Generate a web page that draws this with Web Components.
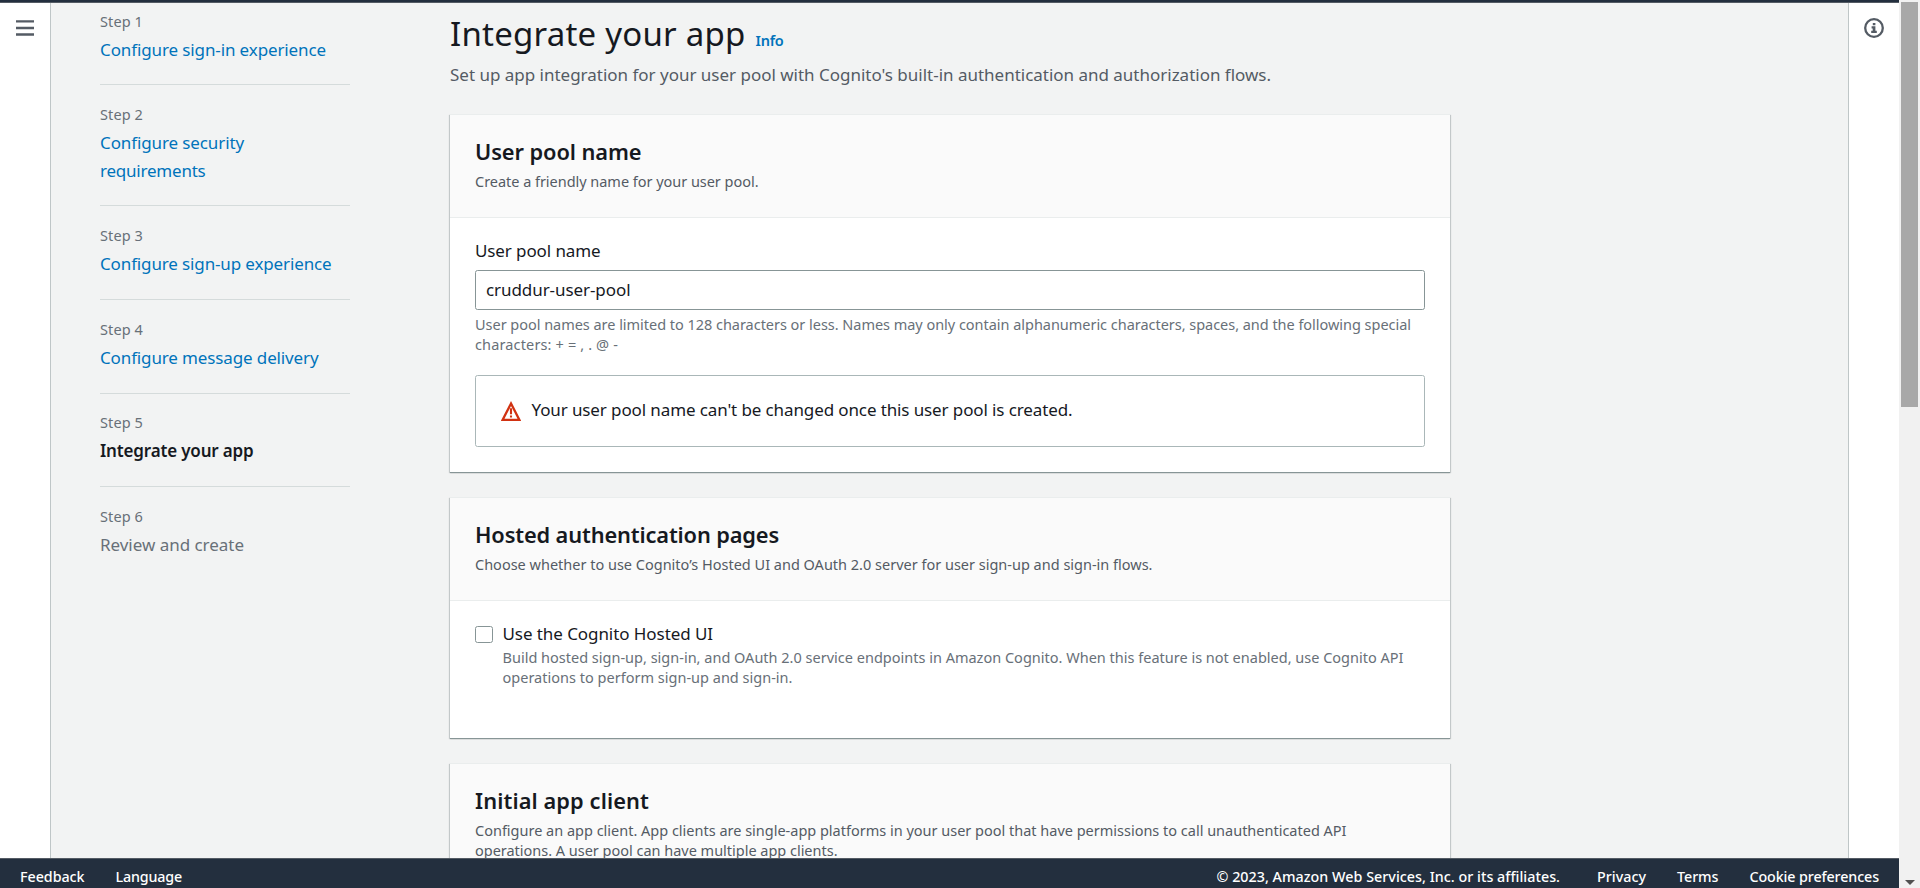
<!DOCTYPE html>
<html lang="en">
<head>
<meta charset="utf-8">
<title>Integrate your app</title>
<style>
  html, body { margin: 0; height: 100%; overflow: hidden; }
  body { font-family: "Noto Sans", "Open Sans", sans-serif; font-size: 17px; line-height: 26px; color: #16191f; }
</style>
</head>
<body>
<console-shell>
  <wizard-nav slot="nav">
    <wizard-step n="1" state="link" first><fit-line w="226">Configure sign-in experience</fit-line></wizard-step>
    <wizard-step n="2" state="link"><fit-line w="144">Configure security</fit-line><fit-line w="105.5">requirements</fit-line></wizard-step>
    <wizard-step n="3" state="link"><fit-line w="231.5">Configure sign-up experience</fit-line></wizard-step>
    <wizard-step n="4" state="link"><fit-line w="218.5">Configure message delivery</fit-line></wizard-step>
    <wizard-step n="5" state="current"><fit-line w="153.5">Integrate your app</fit-line></wizard-step>
    <wizard-step n="6" state="todo"><fit-line w="144">Review and create</fit-line></wizard-step>
  </wizard-nav>

  <page-heading slot="main">
    <fit-line w="295.5">Integrate your app</fit-line>
    <fit-line slot="info" w="28">Info</fit-line>
    <fit-line slot="sub" w="821">Set up app integration for your user pool with Cognito's built-in authentication and authorization flows.</fit-line>
  </page-heading>

  <form-card slot="main">
    <fit-line slot="title" w="166.5">User pool name</fit-line>
    <fit-line slot="sub" w="283.5">Create a friendly name for your user pool.</fit-line>
    <form-field>
      <fit-line slot="label" w="125.5">User pool name</fit-line>
      <fit-line slot="value" w="144.5">cruddur-user-pool</fit-line>
      <fit-line slot="hint" w="936">User pool names are limited to 128 characters or less. Names may only contain alphanumeric characters, spaces, and the following special</fit-line>
      <fit-line slot="hint" w="143">characters: + = , . @ -</fit-line>
    </form-field>
    <warning-box><fit-line w="541">Your user pool name can't be changed once this user pool is created.</fit-line></warning-box>
  </form-card>

  <form-card slot="main" style="--body-bottom: 50.6px">
    <fit-line slot="title" w="304">Hosted authentication pages</fit-line>
    <fit-line slot="sub" w="677.5">Choose whether to use Cognito’s Hosted UI and OAuth 2.0 server for user sign-up and sign-in flows.</fit-line>
    <check-option>
      <fit-line slot="label" w="210.5">Use the Cognito Hosted UI</fit-line>
      <fit-line slot="hint" w="901">Build hosted sign-up, sign-in, and OAuth 2.0 service endpoints in Amazon Cognito. When this feature is not enabled, use Cognito API</fit-line>
      <fit-line slot="hint" w="290">operations to perform sign-up and sign-in.</fit-line>
    </check-option>
  </form-card>

  <form-card slot="main">
    <fit-line slot="title" w="174">Initial app client</fit-line>
    <fit-line slot="sub" w="871.5">Configure an app client. App clients are single-app platforms in your user pool that have permissions to call unauthenticated API</fit-line>
    <fit-line slot="sub" w="362.5">operations. A user pool can have multiple app clients.</fit-line>
  </form-card>

  <console-footer slot="footer">
    <fit-line slot="left" w="64.5">Feedback</fit-line>
    <fit-line slot="left" w="66.5">Language</fit-line>
    <fit-line w="343.5" style="margin-right:6px">© 2023, Amazon Web Services, Inc. or its affiliates.</fit-line>
    <fit-line w="49">Privacy</fit-line>
    <fit-line w="41.5">Terms</fit-line>
    <fit-line w="129.5">Cookie preferences</fit-line>
  </console-footer>
</console-shell>

<script>
const define = (name, html, onConnect) => {
  const tpl = document.createElement('template');
  tpl.innerHTML = html;
  customElements.define(name, class extends HTMLElement {
    constructor() {
      super();
      this.attachShadow({ mode: 'open' }).appendChild(tpl.content.cloneNode(true));
    }
    connectedCallback() { if (onConnect) onConnect(this, this.shadowRoot); }
  });
};

define('console-shell', `
  <style>
    :host { display: grid; grid-template-columns: 1fr 21px; height: 100vh; overflow: hidden; }
    .page { display: grid; grid-template-rows: 3px minmax(0, 1fr) 30px; min-width: 0; height: 100vh; }
    .top { background: #232f3e; border-bottom: 1px solid #545b64; box-sizing: border-box; }
    .mid { display: grid; grid-template-columns: 51px 1fr 51px; background: #f2f3f3; min-height: 0; overflow: hidden; }
    .rail { background: #fff; display: flex; justify-content: center; align-items: flex-start; box-sizing: border-box; }
    .left { border-right: 1px solid #bfc6c7; }
    .right { border-left: 1px solid #bfc6c7; }
    .rail svg { display: block; margin-top: 15px; }
    .work { display: grid; grid-template-columns: 250px 1000px; column-gap: 100px; padding-left: 49px; min-height: 0; overflow: hidden; }
    main { display: flex; flex-direction: column; min-width: 0; }
  </style>
  <div class="page">
    <div class="top"></div>
    <div class="mid">
      <div class="rail left"><svg width="20" height="20" viewBox="0 0 20 20"><path d="M1 3.4h18M1 10h18M1 16.5h18" stroke="#545b64" stroke-width="2.3"/></svg></div>
      <div class="work"><slot name="nav"></slot><main><slot name="main"></slot></main></div>
      <div class="rail right"><svg width="20" height="20" viewBox="0 0 20 20"><circle cx="10" cy="10" r="8.8" fill="none" stroke="#545b64" stroke-width="2.3"/><path d="M8.8 4.9h2.6v2.3H8.8zM7.6 8.3h3.8v4.4h1.4V15H7.2v-2.3h1.5v-2.2H7.6z" fill="#545b64"/></svg></div>
    </div>
    <slot name="footer"></slot>
  </div>
  <scroll-track></scroll-track>`);

define('scroll-track', `
  <style>
    :host { display: flex; flex-direction: column; justify-content: space-between; align-items: center; box-sizing: border-box; background: #f1f1f1; padding: 2px 1px 3px 1px; }
    .thumb { width: 17px; height: 405px; background: #a8a8a8; }
    svg { display: block; }
  </style>
  <div class="thumb"></div>
  <svg width="10" height="5" viewBox="0 0 10 5"><path d="M0 0h10L5 5z" fill="#505050"/></svg>`);

define('wizard-nav', `
  <style>:host { display: block; min-width: 0; }</style><slot></slot>`);

define('wizard-step', `
  <style>
    :host { display: flex; flex-direction: column; gap: 5px; box-sizing: border-box; border-top: 1px solid #d5dbdb; padding: 18.6px 0 21.15px; line-height: 28px; }
    :host([n="2"]) { padding-bottom: 20.7px; }
    :host([first]) { border-top: 0; padding-top: 7.6px; padding-bottom: 20.4px; }
    :host([state=link]) { color: #0073bb; }
    :host([state=current]) { font-weight: 600; }
    :host([state=todo]) { color: #687078; }
    .n { font-size: 14.5px; line-height: 20px; color: #687078; font-weight: 400; }
  </style>
  <div class="n"></div><div><slot></slot></div>`,
  (el, root) => {
    const line = document.createElement('fit-line');
    line.setAttribute('w', '43');
    line.textContent = 'Step ' + el.getAttribute('n');
    root.querySelector('.n').replaceChildren(line);
  });

define('page-heading', `
  <style>
    :host { display: block; padding-top: 9.2px; margin-bottom: 25.6px; }
    .row { display: flex; align-items: baseline; gap: 10px; font-size: 33px; line-height: 44px; height: 44px; }
    .info { font-size: 14.5px; font-weight: 600; color: #0073bb; }
    .sub { margin-top: 6.2px; color: #545b64; }
  </style>
  <div class="row"><slot></slot><div class="info"><slot name="info"></slot></div></div>
  <div class="sub"><slot name="sub"></slot></div>`);

define('form-card', `
  <style>
    :host { display: block; flex: none; background: #fff; border-top: 1px solid #eaeded; margin-bottom: 25px;
      box-shadow: 0 1px 0 0 #879596, 0 1px 1px 0 rgba(0,28,36,.3), 1px 1px 1px 0 rgba(0,28,36,.15), -1px 1px 1px 0 rgba(0,28,36,.15); }
    header { box-sizing: border-box; min-height: 103px; padding: 23.5px 25px 0; background: #fafafa; border-bottom: 1px solid #eaeded; }
    .t { font-size: 21.8px; line-height: 28px; font-weight: 600; }
    .s { margin-top: 4.2px; font-size: 14.5px; line-height: 20px; color: #545b64; }
    .b { padding: 20.4px 25px var(--body-bottom, 25px); }
  </style>
  <header><div class="t"><slot name="title"></slot></div><div class="s"><slot name="sub"></slot></div></header>
  <div class="b"><slot></slot></div>`);

define('form-field', `
  <style>
    :host { display: block; }
    .box { box-sizing: border-box; height: 40px; margin-top: 5.6px; padding: 0 10px; display: flex; align-items: center; border: 1px solid #879596; border-radius: 2.5px; }
    .hint { margin-top: 4.4px; font-size: 14.5px; line-height: 20px; color: #687078; }
  </style>
  <slot name="label"></slot>
  <div class="box"><slot name="value"></slot></div>
  <div class="hint"><slot name="hint"></slot></div>`);

define('warning-box', `
  <style>
    :host { display: flex; align-items: center; gap: 11px; box-sizing: border-box; height: 72px; margin-top: 20.6px; padding: 0 24.5px; border: 1px solid #aab7b8; border-radius: 2.5px; }
    svg { display: block; flex: none; }
    div { margin-top: -1px; }
  </style>
  <svg width="20" height="20" viewBox="0 0 20 20"><path d="M10 2.6 18.3 18.8H1.7z" fill="none" stroke="#d13212" stroke-width="2.3"/><path d="M10 7.2v6M10 14.4v2.2" stroke="#d13212" stroke-width="2.1"/></svg>
  <div><slot></slot></div>`);

define('check-option', `
  <style>
    :host { display: grid; grid-template-columns: 18px 1fr; column-gap: 9.5px; }
    .c { box-sizing: border-box; width: 18px; height: 17px; margin-top: 4.6px; border: 1px solid #879596; border-radius: 2.5px; background: #fff; }
    .hint { font-size: 14.5px; line-height: 20px; color: #687078; }
  </style>
  <div class="c"></div>
  <div><slot name="label"></slot><div class="hint"><slot name="hint"></slot></div></div>`);

define('console-footer', `
  <style>
    :host { display: flex; justify-content: space-between; box-sizing: border-box; height: 30px; padding: 8px 20px 0; background: #232f3e; border-top: 1px solid #545b64; color: #fff; font-size: 14.3px; line-height: 20px; font-weight: 500; }
    div { display: flex; gap: 31px; }
  </style>
  <div><slot name="left"></slot></div><div><slot></slot></div>`);

// One line of text whose tracking is adjusted so that it spans the width in "w".
define('fit-line', `
  <style>:host { display: block; white-space: nowrap; } span { display: inline-block; }</style><span><slot></slot></span>`,
  (el, root) => {
    const span = root.querySelector('span');
    const target = parseFloat(el.getAttribute('w'));
    el.style.width = target + 'px';
    span.style.letterSpacing = '0';
    span.style.letterSpacing = ((target - span.getBoundingClientRect().width) / el.textContent.length) + 'px';
  });
</script>
</body>
</html>
